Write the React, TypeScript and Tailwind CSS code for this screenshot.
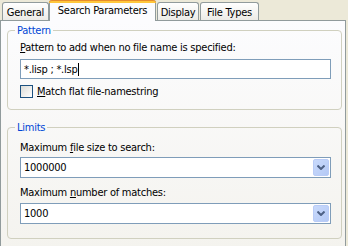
import React from "react";

const FONT = { fontFamily: '"DejaVu Sans Condensed", "DejaVu Sans", "Liberation Sans", sans-serif' };

function Tab({ label, selected, className }: { label: string; selected?: boolean; className?: string }) {
  if (selected) {
    return (
      <div
        className={
          "relative h-[21px] -mb-px bg-[#FCFCFE] border-x border-[#919B9C] rounded-t-[3px] flex items-start justify-center pt-[4px] " +
          (className ?? "")
        }
      >
        <div className="absolute -left-px -right-px top-0 h-[3px] rounded-t-[3px] bg-[#FFC73C] border-t border-[#E68B2C]" />
        <span className="relative">{label}</span>
      </div>
    );
  }
  return (
    <div
      className={
        "h-[18px] bg-gradient-to-b from-white to-[#ECEBE6] border-x border-t border-[#919B9C] rounded-t-[3px] flex items-start justify-center pt-[3px] " +
        (className ?? "")
      }
    >
      {label}
    </div>
  );
}

function GroupBox({ title, className, children }: { title: string; className?: string; children: React.ReactNode }) {
  return (
    <fieldset className={"border border-[#D0D0BF] rounded-[4px] " + (className ?? "")}>
      <legend className="ml-[7px] px-[2px] text-[#0046D5] leading-[13px]">{title}</legend>
      {children}
    </fieldset>
  );
}

function Combo({ value }: { value: string }) {
  return (
    <div className="relative w-[311px] h-[21px] border border-[#7F9DB9] bg-white flex items-center pl-[3px]">
      <span>{value}</span>
      <div className="absolute right-[1px] top-[1px] w-[16px] h-[17px] rounded-[2px] border border-[#B9CCF7] bg-gradient-to-br from-[#C9DAFC] to-[#B4C9F5] flex items-center justify-center">
        <svg width="8" height="5" viewBox="0 0 8 5">
          <path d="M0.5 0.5 L4 4 L7.5 0.5" stroke="#4D6185" strokeWidth="2" fill="none" />
        </svg>
      </div>
    </div>
  );
}

export default function App() {
  return (
    <div
      className="w-[348px] h-[246px] bg-[#ECE9D8] overflow-hidden text-[11px] leading-[13px] tracking-[-0.25px] text-black"
      style={FONT}
    >
      {/* tabs */}
      <div className="relative z-10 flex items-end h-[20px] pl-[2px]">
        <Tab label="General" className="w-[47px]" />
        <Tab label="Search Parameters" selected className="w-[107px]" />
        <Tab label="Display" className="w-[42px] ml-px" />
        <Tab label="File Types" className="w-[59px] ml-px" />
      </div>

      {/* page */}
      <div className="w-[346px] h-[232px] border border-[#919B9C] bg-gradient-to-b from-[#FCFCFE] to-[#F4F3EE] pt-[3px] pl-[6px]">
        <GroupBox title="Pattern" className="w-[335px]">
          <div className="pl-[12px] pb-[11px]">
            <div className="mt-[4px]">
              <span className="underline">P</span>attern to add when no file name is specified:
            </div>
            <div className="mt-[5px] w-[311px] h-[20px] border border-[#7F9DB9] bg-white flex items-center pl-[3px]">
              <span>*.lisp ; *.lsp</span>
              <span className="w-px h-[13px] bg-black ml-px" />
            </div>
            <div className="mt-[6px] flex items-center h-[13px]">
              <div className="w-[13px] h-[13px] border border-[#1C5180] bg-gradient-to-br from-[#DCDCD7] to-white" />
              <span className="ml-[4px]">
                <span className="underline">M</span>atch flat file-namestring
              </span>
            </div>
          </div>
        </GroupBox>

        <GroupBox title="Limits" className="w-[335px] mt-[11px]">
          <div className="pl-[12px] pb-[14px]">
            <div className="mt-[7px]">
              Maximum <span className="underline">f</span>ile size to search:
            </div>
            <div className="mt-[3px]">
              <Combo value="1000000" />
            </div>
            <div className="mt-[8px]">
              Maximum <span className="underline">n</span>umber of matches:
            </div>
            <div className="mt-[4px]">
              <Combo value="1000" />
            </div>
          </div>
        </GroupBox>
      </div>
    </div>
  );
}
